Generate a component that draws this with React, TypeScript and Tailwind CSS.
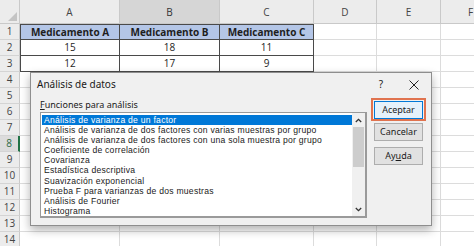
import React from 'react';

const cols = [
  { id: 'A', w: 'w-[100px]' },
  { id: 'B', w: 'w-[100px]' },
  { id: 'C', w: 'w-[94px]' },
  { id: 'D', w: 'w-[63px]' },
  { id: 'E', w: 'w-[64px]' },
  { id: 'F', w: 'w-[60px]' },
];

const data: Record<number, string[]> = {
  1: ['Medicamento A', 'Medicamento B', 'Medicamento C'],
  2: ['15', '18', '11'],
  3: ['12', '17', '9'],
};

const funciones = [
  'Análisis de varianza de un factor',
  'Análisis de varianza de dos factores con varias muestras por grupo',
  'Análisis de varianza de dos factores con una sola muestra por grupo',
  'Coeficiente de correlación',
  'Covarianza',
  'Estadística descriptiva',
  'Suavización exponencial',
  'Prueba F para varianzas de dos muestras',
  'Análisis de Fourier',
  'Histograma',
];

const cellFont = { fontFamily: '"Open Sans", "Liberation Sans", sans-serif' };
const uiFont = { fontFamily: '"Noto Sans", "Open Sans", sans-serif' };
const listFont = { fontFamily: '"Liberation Sans", Arial, sans-serif' };

function HeaderRow() {
  return (
    <div className="flex h-[24px]">
      {/* corner with select-all triangle */}
      <div className="relative w-[20px] shrink-0 bg-[#ececec] border-r border-b border-[#c9c9c9]">
        <div className="absolute right-[2px] bottom-[2px] w-0 h-0 border-l-[9px] border-l-transparent border-b-[9px] border-b-[#c4c4c4]" />
      </div>
      {cols.map((c) => (
        <div
          key={c.id}
          className={`${c.w} shrink-0 flex items-center justify-center pt-[2px] text-[10px] border-r border-b border-[#c9c9c9] ${
            c.id === 'B' ? 'bg-[#d6d6d6] text-[#333]' : 'bg-[#ececec] text-[#444]'
          }`}
          style={cellFont}
        >
          {c.id}
        </div>
      ))}
    </div>
  );
}

function SheetRow({ n }: { n: number }) {
  const row = data[n];
  const active = n === 8;
  return (
    <div className="flex h-[16px]">
      <div
        className={`w-[20px] shrink-0 flex items-center justify-center text-[10px] border-b border-[#d4d4d4] ${
          active ? 'bg-[#dcdcdc] text-[#2c6b45] border-r-2 border-r-[#217346]' : 'bg-[#ececec] text-[#444] border-r border-r-[#c9c9c9]'
        }`}
        style={cellFont}
      >
        {n}
      </div>
      {cols.map((c, i) => {
        const inTable = row && i < 3;
        if (inTable) {
          return (
            <div
              key={c.id}
              className={`${c.w} shrink-0 flex items-center justify-center text-[10px] text-[#1e1e1e] border-r border-b border-[#4a4a4a] ${
                n === 1 ? 'bg-[#b4c6e7] font-bold border-t' : 'bg-white'
              } ${i === 0 ? 'border-l' : ''}`}
              style={cellFont}
            >
              {row[i]}
            </div>
          );
        }
        return <div key={c.id} className={`${c.w} shrink-0 bg-white border-r border-b border-[#dcdcdc]`} />;
      })}
    </div>
  );
}

function Boton({ label, u }: { label: string; u?: number }) {
  return (
    <div className="w-[49px] h-[18px] flex items-center justify-center bg-[#e1e1e1] border border-[#adadad] text-[9px] text-[#1a1a1a]" style={uiFont}>
      {u === undefined ? (
        label
      ) : (
        <span>
          {label.slice(0, u)}
          <span className="underline">{label[u]}</span>
          {label.slice(u + 1)}
        </span>
      )}
    </div>
  );
}

function Dialogo() {
  return (
    <div className="absolute left-[30px] top-[72px] w-[402px] h-[154px] bg-[#f0f0f0] border border-[#8e8e8e] shadow-[0_4px_9px_rgba(0,0,0,0.3)]" style={uiFont}>
      <div className="flex items-center h-[23px] pl-[6px] pr-[12px] text-[10px] text-[#1a1a1a]">
        <span className="flex-1">Análisis de datos</span>
        <span className="text-[10px] mr-[26px]">?</span>
        <svg width="10" height="10" viewBox="0 0 10 10">
          <path d="M0.5 0.5 L9.5 9.5 M9.5 0.5 L0.5 9.5" stroke="#222" strokeWidth="1" />
        </svg>
      </div>
      <div className="flex pt-[2px]">
        <div className="ml-[9px] w-[327px]">
          <div className="h-[14px] flex items-center text-[9px] text-[#1a1a1a]">
            <span>
              <span className="underline">F</span>unciones para análisis
            </span>
          </div>
          <div className="h-[106px] flex bg-white border border-[#9a9a9a] border-r-2 border-b-2 pt-[2px] pl-[1px]">
            <div className="flex-1 overflow-hidden" style={listFont}>
              {funciones.map((f, i) => (
                <div
                  key={f}
                  className={`h-[10.1px] leading-[10.1px] pl-[2px] text-[8.6px] tracking-[0.25px] whitespace-nowrap ${
                    i === 0 ? 'bg-[#0078d7] text-white' : 'text-[#1a1a1a]'
                  }`}
                >
                  {f}
                </div>
              ))}
            </div>
            <div className="w-[13px] -mt-[2px] flex flex-col items-center bg-[#f0f0f0]">
              <svg className="mt-[5px]" width="7" height="5" viewBox="0 0 7 5">
                <path d="M0.8 4 L3.5 1.3 L6.2 4" stroke="#333" strokeWidth="1.3" fill="none" />
              </svg>
              <div className="mt-[4px] w-[11px] h-[40px] bg-[#cdcdcd]" />
              <div className="flex-1" />
              <svg className="mb-[4px]" width="7" height="5" viewBox="0 0 7 5">
                <path d="M0.8 1 L3.5 3.7 L6.2 1" stroke="#333" strokeWidth="1.3" fill="none" />
              </svg>
            </div>
          </div>
        </div>
        <div className="ml-[4px] w-[55px] flex flex-col items-center">
          <div className="w-[55px] h-[23px] flex items-center justify-center border-2 border-[#e0734f]">
            <div className="w-[49px] h-[18px] flex items-center justify-center bg-[#e5f1fb] border border-[#0078d7] text-[9px] text-[#1a1a1a]">
              Aceptar
            </div>
          </div>
          <div className="mt-[2px]">
            <Boton label="Cancelar" />
          </div>
          <div className="mt-[6px]">
            <Boton label="Ayuda" u={2} />
          </div>
        </div>
      </div>
    </div>
  );
}

export default function App() {
  return (
    <div className="relative w-[474px] h-[246px] overflow-hidden bg-white">
      <HeaderRow />
      {Array.from({ length: 14 }).map((_, i) => (
        <SheetRow key={i} n={i + 1} />
      ))}
      <Dialogo />
    </div>
  );
}
